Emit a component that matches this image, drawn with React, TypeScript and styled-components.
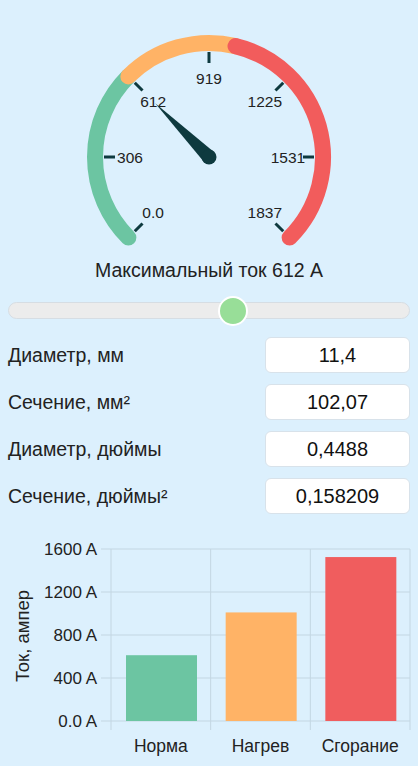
import React from "react";
import styled, { createGlobalStyle } from "styled-components";

const GlobalStyle = createGlobalStyle`
  body {
    margin: 0;
    background: #dcf0fd;
    font-family: "Liberation Sans", Arial, sans-serif;
    color: #222;
  }
`;

const MAX_CURRENT = 1837;
const current = 612;
const heatLimit = 1010;
const burnLimit = 1525;
const sliderPos = 0.56;

const GREEN = "#6cc5a2";
const ORANGE = "#ffb366";
const RED = "#f25c5c";
const INK = "#0e3a3f";

// gauge geometry
const CX = 130;
const CY = 157;
const R = 114;
const START = -135;
const SWEEP = 270;

const toAngle = (v: number) => START + (v / MAX_CURRENT) * SWEEP;
const polar = (deg: number, r: number) => {
  const a = (deg * Math.PI) / 180;
  return { x: CX + r * Math.sin(a), y: CY - r * Math.cos(a) };
};
const arc = (from: number, to: number) => {
  const p1 = polar(from, R);
  const p2 = polar(to, R);
  const large = to - from > 180 ? 1 : 0;
  return `M ${p1.x} ${p1.y} A ${R} ${R} 0 ${large} 1 ${p2.x} ${p2.y}`;
};

const ticks = [0, 306, 612, 919, 1225, 1531, 1837];

const Gauge: React.FC<{ value: number }> = ({ value }) => {
  const na = toAngle(value);
  const tip = polar(na, 76);
  const left = polar(na - 90, 7);
  const right = polar(na + 90, 7);
  return (
    <GaugeSvg width={260} height={250} viewBox="0 0 260 250">
      <path d={arc(START, toAngle(612))} stroke={GREEN} strokeWidth={16} fill="none" strokeLinecap="round" />
      <path d={arc(toAngle(612), toAngle(heatLimit))} stroke={ORANGE} strokeWidth={16} fill="none" strokeLinecap="round" />
      <path d={arc(toAngle(heatLimit), START + SWEEP)} stroke={RED} strokeWidth={16} fill="none" strokeLinecap="round" />
      {ticks.map((t, i) => {
        const a = START + i * 45;
        const p1 = polar(a, 94);
        const p2 = polar(a, 105);
        const lp = polar(a, 79);
        return (
          <g key={t}>
            <line x1={p1.x} y1={p1.y} x2={p2.x} y2={p2.y} stroke={INK} strokeWidth={3} />
            <TickLabel x={lp.x} y={lp.y} textAnchor="middle" dominantBaseline="central">
              {t === 0 ? "0.0" : t}
            </TickLabel>
          </g>
        );
      })}
      <path d={`M ${tip.x} ${tip.y} L ${left.x} ${left.y} L ${right.x} ${right.y} Z`} fill={INK} />
      <circle cx={CX} cy={CY} r={7.5} fill={INK} />
    </GaugeSvg>
  );
};

const rows = [
  { label: "Диаметр, мм", value: "11,4" },
  { label: "Сечение, мм²", value: "102,07" },
  { label: "Диаметр, дюймы", value: "0,4488" },
  { label: "Сечение, дюймы²", value: "0,158209" },
];

// bar chart geometry
const PLOT_L = 111;
const PLOT_R = 410;
const Y0 = 192;
const PX_PER_A = 43 / 400;
const yOf = (v: number) => Y0 - v * PX_PER_A;

const bars = [
  { name: "Норма", value: current, color: GREEN },
  { name: "Нагрев", value: heatLimit, color: ORANGE },
  { name: "Сгорание", value: burnLimit, color: "#f05d5e" },
];

const CurrentChart: React.FC = () => {
  const step = (PLOT_R - PLOT_L) / bars.length;
  return (
    <ChartSvg width={418} height={236} viewBox="0 0 418 236">
      {[0, 400, 800, 1200, 1600].map((v) => (
        <g key={v}>
          <line x1={101} x2={PLOT_R} y1={yOf(v)} y2={yOf(v)} stroke="#c3d6e2" strokeWidth={1} />
          <AxisText x={97} y={yOf(v)} textAnchor="end" dominantBaseline="central">
            {v === 0 ? "0.0" : v} A
          </AxisText>
        </g>
      ))}
      {[0, 1, 2, 3].map((i) => (
        <line
          key={i}
          x1={PLOT_L + i * step}
          x2={PLOT_L + i * step}
          y1={20}
          y2={201}
          stroke="#c3d6e2"
          strokeWidth={1}
        />
      ))}
      {bars.map((b, i) => {
        const x0 = PLOT_L + i * step;
        return (
          <g key={b.name}>
            <rect x={x0 + 15} y={yOf(b.value)} width={71} height={Y0 - yOf(b.value)} fill={b.color} />
            <CategoryText x={x0 + step / 2} y={217} textAnchor="middle" dominantBaseline="central">
              {b.name}
            </CategoryText>
          </g>
        );
      })}
      <AxisTitle x={22} y={107} textAnchor="middle" dominantBaseline="central" transform="rotate(-90 22 107)">
        Ток, ампер
      </AxisTitle>
    </ChartSvg>
  );
};

export default function App() {
  return (
    <Page>
      <GlobalStyle />
      <Gauge value={current} />
      <Title>Максимальный ток {current} А</Title>
      <Track>
        <Thumb style={{ left: `${sliderPos * 100}%` }} />
      </Track>
      <Fields>
        {rows.map((r) => (
          <Row key={r.label}>
            <Label>{r.label}</Label>
            <Field readOnly value={r.value} />
          </Row>
        ))}
      </Fields>
      <CurrentChart />
    </Page>
  );
}

const Page = styled.div`
  width: 418px;
  display: flex;
  flex-direction: column;
  align-items: center;
`;

const GaugeSvg = styled.svg`
  display: block;
`;

const TickLabel = styled.text`
  font-family: "Liberation Sans", Arial, sans-serif;
  font-size: 15.5px;
  fill: #222;
`;

const Title = styled.div`
  margin-top: 9px;
  font-size: 19.5px;
  line-height: 22px;
  color: #222;
`;

const Track = styled.div`
  position: relative;
  box-sizing: border-box;
  width: 402px;
  height: 17px;
  margin-top: 21px;
  border-radius: 9px;
  background: #ececec;
  border: 1px solid #d6dde3;
`;

const Thumb = styled.div`
  position: absolute;
  top: 50%;
  width: 30px;
  height: 30px;
  box-sizing: border-box;
  border-radius: 50%;
  background: #98de98;
  border: 2px solid #fff;
  transform: translate(-50%, -50%);
`;

const Fields = styled.div`
  width: 402px;
  margin-top: 18px;
  display: flex;
  flex-direction: column;
  gap: 11px;
`;

const Row = styled.div`
  display: flex;
  align-items: center;
  justify-content: space-between;
`;

const Label = styled.span`
  font-size: 19.5px;
  color: #222;
`;

const Field = styled.input`
  box-sizing: border-box;
  width: 145px;
  height: 36px;
  border: 1px solid #d8e2ea;
  border-radius: 6px;
  background: #fff;
  text-align: center;
  font-family: "Liberation Sans", Arial, sans-serif;
  font-size: 20px;
  color: #111;
  outline: none;
`;

const ChartSvg = styled.svg`
  display: block;
  margin-top: 15px;
`;

const AxisText = styled.text`
  font-family: "Liberation Sans", Arial, sans-serif;
  font-size: 17px;
  fill: #222;
`;

const CategoryText = styled.text`
  font-family: "Liberation Sans", Arial, sans-serif;
  font-size: 17.5px;
  fill: #222;
`;

const AxisTitle = styled.text`
  font-family: "Liberation Sans", Arial, sans-serif;
  font-size: 18.5px;
  fill: #222;
`;
